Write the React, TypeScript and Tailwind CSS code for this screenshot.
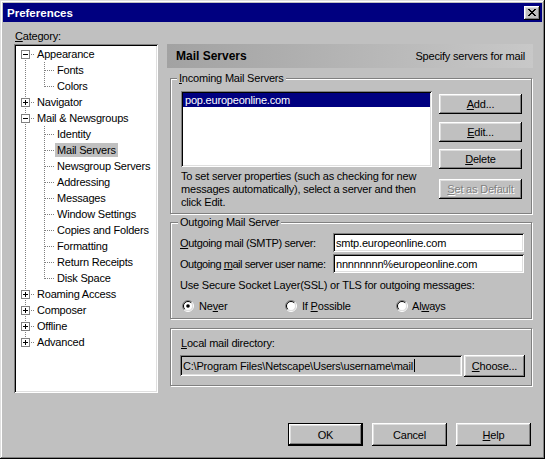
import type { ReactNode } from 'react';

const raised =
  'shadow-[inset_-1px_-1px_#000,inset_1px_1px_#fff,inset_-2px_-2px_#808080,inset_2px_2px_#dfdfdf]';
const sunken =
  'shadow-[inset_1px_1px_#808080,inset_-1px_-1px_#fff,inset_2px_2px_#000,inset_-2px_-2px_#dfdfdf]';
const etched = 'border border-[#808080] shadow-[inset_1px_1px_#fff,1px_1px_#fff]';

type TreeRow = {
  label: string;
  level: 1 | 2;
  exp?: '+' | '-';
  l1?: 'first' | 'mid' | 'last';
  l2?: 'mid' | 'last';
  sel?: boolean;
};

const tree: TreeRow[] = [
  { label: 'Appearance', level: 1, exp: '-', l1: 'first' },
  { label: 'Fonts', level: 2, l2: 'mid' },
  { label: 'Colors', level: 2, l2: 'last' },
  { label: 'Navigator', level: 1, exp: '+', l1: 'mid' },
  { label: 'Mail & Newsgroups', level: 1, exp: '-', l1: 'mid' },
  { label: 'Identity', level: 2, l2: 'mid' },
  { label: 'Mail Servers', level: 2, l2: 'mid', sel: true },
  { label: 'Newsgroup Servers', level: 2, l2: 'mid' },
  { label: 'Addressing', level: 2, l2: 'mid' },
  { label: 'Messages', level: 2, l2: 'mid' },
  { label: 'Window Settings', level: 2, l2: 'mid' },
  { label: 'Copies and Folders', level: 2, l2: 'mid' },
  { label: 'Formatting', level: 2, l2: 'mid' },
  { label: 'Return Receipts', level: 2, l2: 'mid' },
  { label: 'Disk Space', level: 2, l2: 'last' },
  { label: 'Roaming Access', level: 1, exp: '+', l1: 'mid' },
  { label: 'Composer', level: 1, exp: '+', l1: 'mid' },
  { label: 'Offline', level: 1, exp: '+', l1: 'mid' },
  { label: 'Advanced', level: 1, exp: '+', l1: 'last' },
];

function Connector({ row }: { row: TreeRow }) {
  const w = row.level === 1 ? 19 : 39;
  const v1 =
    row.level === 2 || row.l1 === 'mid' ? [0, 16] : row.l1 === 'first' ? [8, 16] : [0, 8];
  return (
    <svg width={w} height={16} shapeRendering="crispEdges" className="shrink-0">
      <g stroke="#808080" strokeDasharray="1 1" fill="none">
        <line x1={9.5} y1={v1[0]} x2={9.5} y2={v1[1]} />
        {row.level === 1 && <line x1={15} y1={8.5} x2={18} y2={8.5} />}
        {row.level === 2 && (
          <>
            <line x1={28.5} y1={0} x2={28.5} y2={row.l2 === 'last' ? 9 : 16} />
            <line x1={29} y1={8.5} x2={39} y2={8.5} />
          </>
        )}
      </g>
      {row.exp && (
        <g>
          <rect x={5.5} y={4.5} width={8} height={8} fill="#fff" stroke="#808080" />
          <line x1={7} y1={8.5} x2={12} y2={8.5} stroke="#000" />
          {row.exp === '+' && <line x1={9.5} y1={6} x2={9.5} y2={11} stroke="#000" />}
        </g>
      )}
    </svg>
  );
}

function Btn({
  children,
  className = '',
  disabled = false,
}: {
  children: ReactNode;
  className?: string;
  disabled?: boolean;
}) {
  return (
    <button
      className={`flex items-center justify-center bg-[#c0c0c0] ${raised} ${
        disabled ? 'text-[#808080] [text-shadow:1px_1px_0_#fff]' : 'text-black'
      } ${className}`}
    >
      {children}
    </button>
  );
}

function Radio({ checked = false }: { checked?: boolean }) {
  return (
    <svg width={12} height={12} className="shrink-0">
      <circle cx={6} cy={6} r={4.5} fill="#fff" />
      <path d="M2.1 9.9A5.5 5.5 0 0 1 9.9 2.1" stroke="#808080" fill="none" />
      <path d="M9.9 2.1A5.5 5.5 0 0 1 2.1 9.9" stroke="#fff" fill="none" />
      <path d="M2.8 9.2A4.5 4.5 0 0 1 9.2 2.8" stroke="#000" fill="none" />
      <path d="M9.2 2.8A4.5 4.5 0 0 1 2.8 9.2" stroke="#dfdfdf" fill="none" />
      {checked && <circle cx={6} cy={6} r={1.8} fill="#000" />}
    </svg>
  );
}

const closeGlyph = [
  [0, 0, 2], [6, 0, 2],
  [1, 1, 2], [5, 1, 2],
  [2, 2, 4],
  [3, 3, 2],
  [2, 4, 4],
  [1, 5, 2], [5, 5, 2],
  [0, 6, 2], [6, 6, 2],
];

export default function App() {
  return (
    <div className="flex h-[459px] w-[545px] flex-col bg-[#c0c0c0] p-[3px] text-[11px] leading-[14px] tracking-[-0.2px] text-black [font-family:'Liberation_Sans',Arial,sans-serif] shadow-[inset_-1px_-1px_#000,inset_1px_1px_#dfdfdf,inset_-2px_-2px_#808080,inset_2px_2px_#fff]">
      {/* title bar */}
      <div className="flex h-[19px] items-center justify-between bg-[#000080] pl-[4px] pr-[2px]">
        <span className="text-[11.5px] font-bold tracking-normal text-white">Preferences</span>
        <button className={`flex h-[14px] w-[16px] items-center justify-center bg-[#c0c0c0] ${raised}`}>
          <svg width={8} height={7} shapeRendering="crispEdges">
            {closeGlyph.map(([x, y, w], i) => (
              <rect key={i} x={x} y={y} width={w} height={1} fill="#000" />
            ))}
          </svg>
        </button>
      </div>

      <div className="flex flex-1">
        {/* category tree */}
        <div className="ml-[11px] flex w-[144px] flex-col">
          <div className="mt-[7px] h-[14px] pl-[1px]">
            <span className="underline">C</span>ategory:
          </div>
          <div className={`mt-[1px] h-[349px] bg-white p-[2px] ${sunken}`}>
            {tree.map((row) => (
              <div key={row.label} className="flex h-[16px] items-center">
                <Connector row={row} />
                <span
                  className={`h-[14px] px-[2px] leading-[14px] whitespace-nowrap ${
                    row.sel ? 'bg-[#c0c0c0]' : ''
                  }`}
                >
                  {row.label}
                </span>
              </div>
            ))}
          </div>
        </div>

        {/* page */}
        <div className="ml-[9px] flex w-[366px] flex-col pt-[22px]">
          <div className="flex h-[24px] items-center justify-between bg-gradient-to-r from-[#a2a2a2] to-[#c8c8c8] pr-[8px] pl-[9px]">
            <span className="text-[12px] font-bold tracking-normal">Mail Servers</span>
            <span>Specify servers for mail</span>
          </div>

          {/* incoming */}
          <div className={`mt-[10px] mr-[1px] ml-[3px] h-[136px] ${etched}`}>
            <div className="-mt-[8px] ml-[6px] h-[14px] w-fit bg-[#c0c0c0] px-[2px]">
              <span className="underline">I</span>ncoming Mail Servers
            </div>
            <div className="mt-[6px] flex pl-[10px]">
              <div className="w-[251px]">
                <div className={`h-[76px] bg-white p-[2px] ${sunken}`}>
                  <div className="h-[14px] bg-[#000080] pl-[2px] text-white">pop.europeonline.com</div>
                </div>
                <p className="mt-[3px] leading-[13px] whitespace-nowrap">
                  To set server properties (such as checking for new
                  <br />
                  messages automatically), select a server and then
                  <br />
                  click Edit.
                </p>
              </div>
              <div className="ml-[7px] flex flex-col pt-[3px]">
                <Btn className="h-[20px] w-[83px]">
                  <span className="underline">A</span>dd...
                </Btn>
                <Btn className="mt-[8px] h-[20px] w-[83px]">
                  <span className="underline">E</span>dit...
                </Btn>
                <Btn className="mt-[7px] h-[20px] w-[83px]">
                  <span className="underline">D</span>elete
                </Btn>
                <Btn disabled className="mt-[10px] h-[20px] w-[83px]">
                  <span className="underline">S</span>et as Default
                </Btn>
              </div>
            </div>
          </div>

          {/* outgoing */}
          <div className={`mt-[8px] mr-[1px] ml-[3px] h-[97px] ${etched}`}>
            <div className="-mt-[8px] ml-[7px] h-[14px] w-fit bg-[#c0c0c0] px-[2px]">
              Outgoing Mail Server
            </div>
            <div className="mt-[4px] flex h-[19px] items-center pl-[9px]">
              <span className="w-[153px] shrink-0 whitespace-nowrap tracking-[-0.35px]">
                <span className="underline">O</span>utgoing mail (SMTP) server:
              </span>
              <div className={`flex h-[19px] w-[191px] items-center bg-white pl-[3px] ${sunken}`}>
                smtp.europeonline.com
              </div>
            </div>
            <div className="mt-[2px] flex h-[19px] items-center pl-[9px]">
              <span className="w-[153px] shrink-0 whitespace-nowrap tracking-[-0.45px]">
                Outgoing <span className="underline">m</span>ail server user name:
              </span>
              <div className={`flex h-[19px] w-[191px] items-center bg-white pl-[3px] ${sunken}`}>
                nnnnnnnn%europeonline.com
              </div>
            </div>
            <div className="mt-[5px] h-[14px] pl-[9px]">
              Use Secure Socket Layer(SSL) or TLS for outgoing messages:
            </div>
            <div className="mt-[6px] flex h-[16px] items-center pl-[11px]">
              <label className="flex w-[103px] items-center gap-[5px]">
                <Radio checked />
                <span>
                  Ne<span className="underline">v</span>er
                </span>
              </label>
              <label className="flex w-[111px] items-center gap-[5px]">
                <Radio />
                <span>
                  If <span className="underline">P</span>ossible
                </span>
              </label>
              <label className="flex items-center gap-[4px]">
                <Radio />
                <span>
                  Al<span className="underline">w</span>ays
                </span>
              </label>
            </div>
          </div>

          {/* local directory */}
          <div className={`mt-[9px] mr-[1px] ml-[3px] h-[58px] ${etched}`}>
            <div className="mt-[7px] h-[14px] pl-[10px]">
              <span className="underline">L</span>ocal mail directory:
            </div>
            <div className="mt-[5px] flex pl-[9px]">
              <div className={`flex h-[21px] w-[282px] items-center bg-[#c0c0c0] pl-[3px] ${sunken}`}>
                <span>C:\Program Files\Netscape\Users\username\mail</span>
                <span className="ml-[1px] h-[13px] w-[1px] bg-black" />
              </div>
              <Btn className="ml-[2px] h-[22px] w-[61px]">
                <span className="underline">C</span>hoose...
              </Btn>
            </div>
          </div>

          {/* dialog buttons */}
          <div className="mt-[37px] flex justify-end gap-[9px] pr-[2px]">
            <Btn className="h-[23px] w-[75px] border border-black">OK</Btn>
            <Btn className="h-[23px] w-[75px]">Cancel</Btn>
            <Btn className="h-[23px] w-[75px]">
              <span className="underline">H</span>elp
            </Btn>
          </div>
        </div>
      </div>
    </div>
  );
}
